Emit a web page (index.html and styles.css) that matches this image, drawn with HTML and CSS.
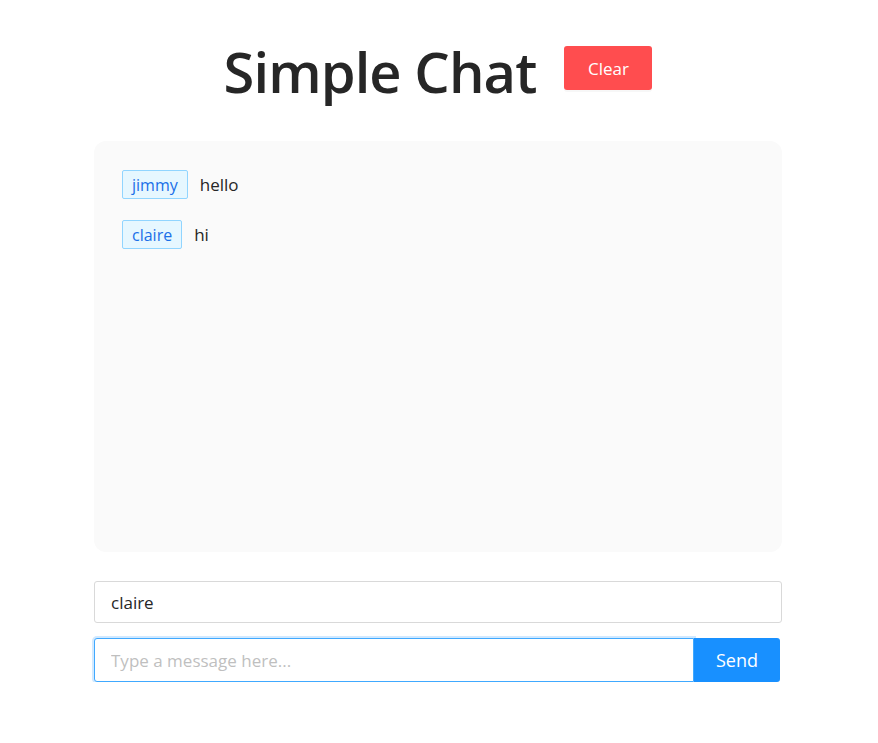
FILE: index.html
```html
<!DOCTYPE html>
<html>
<head>
<meta charset="utf-8">
<link rel="stylesheet" href="styles.css">
</head>
<body>
<div class="app">
  <header class="header">
    <h1 class="title">Simple Chat</h1>
    <button class="btn btn-clear">Clear</button>
  </header>
  <div class="chat">
    <div class="msg"><span class="tag">jimmy</span><span class="text">hello</span></div>
    <div class="msg"><span class="tag">claire</span><span class="text">hi</span></div>
  </div>
  <div class="form">
    <input class="input name" type="text" value="claire">
    <div class="send-row">
      <input class="input message" type="text" placeholder="Type a message here...">
      <button class="btn btn-send">Send</button>
    </div>
  </div>
</div>
</body>
</html>
```

FILE: styles.css
```css
* { box-sizing: border-box; }
body {
  margin: 0;
  background: #fff;
  font-family: "Open Sans", "Noto Sans", sans-serif;
  color: #262626;
}
.app {
  width: 688px;
  margin: 0 auto;
  padding-top: 28px;
  transform: translateX(-1px);
}
.header {
  display: flex;
  align-items: center;
  justify-content: center;
  gap: 28px;
  height: 86px;
}
.title {
  margin: 0;
  font-size: 56px;
  font-weight: 600;
  letter-spacing: -0.9px;
  color: #262626;
  line-height: 1;
}
.btn {
  border: none;
  font-family: inherit;
  color: #fff;
  cursor: pointer;
}
.btn-clear {
  background: #ff4d4f;
  width: 88px;
  height: 44px;
  font-size: 17px;
  border-radius: 3px;
  margin-top: -6px;
  box-shadow: 0 2px 0 rgba(0,0,0,0.03);
}
.chat {
  margin-top: 27px;
  height: 411px;
  background: #fafafa;
  border-radius: 12px;
  padding: 29px 28px;
  display: flex;
  flex-direction: column;
  gap: 21px;
}
.msg {
  display: flex;
  align-items: center;
  gap: 12px;
}
.tag {
  display: inline-flex;
  align-items: center;
  height: 29px;
  padding: 0 9px;
  font-size: 16px;
  color: #1a6fe8;
  background: #e6f7ff;
  border: 1px solid #91d5ff;
  border-radius: 2px;
}
.text {
  font-size: 17px;
  color: #262626;
}
.form {
  margin-top: 29px;
  display: flex;
  flex-direction: column;
  gap: 15px;
}
.input {
  font-family: inherit;
  font-size: 17px;
  color: #262626;
  background: #fff;
  border: 1px solid #d9d9d9;
  border-radius: 3px;
  padding: 0 16px;
  outline: none;
}
.name {
  width: 688px;
  height: 42px;
}
.send-row {
  display: flex;
  width: 686px;
}
.message {
  flex: 1;
  height: 44px;
  border-color: #40a9ff;
  border-radius: 3px 0 0 3px;
  box-shadow: 0 0 0 2px rgba(24,144,255,0.2);
}
.message::placeholder { color: #bfbfbf; }
.btn-send {
  width: 86px;
  height: 44px;
  background: #1890ff;
  font-size: 18px;
  border-radius: 0 3px 3px 0;
}
```
